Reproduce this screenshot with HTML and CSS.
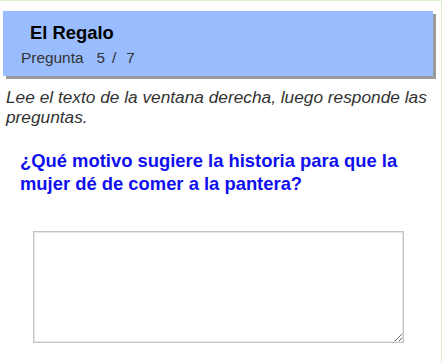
FILE: index.html
```html
<!DOCTYPE html>
<html lang="es">
<head>
<meta charset="utf-8">
<title>El Regalo</title>
<link rel="stylesheet" href="styles.css">
</head>
<body>
<div class="frame">
  <header class="banner">
    <h1 class="title">El Regalo</h1>
    <div class="counter"><span>Pregunta</span><span class="num">5</span><span class="sep">/</span><span class="num">7</span></div>
  </header>
  <p class="instructions">Lee el texto de la ventana derecha, luego responde las preguntas.</p>
  <h2 class="question">¿Qué motivo sugiere la historia para que la mujer dé de comer a la pantera?</h2>
  <div class="answer-wrap">
    <textarea class="answer"></textarea>
  </div>
</div>
</body>
</html>
```
FILE: styles.css
```css
html, body {
  margin: 0;
  padding: 0;
  background: #fff;
}
body {
  font-family: "Liberation Sans", Arial, sans-serif;
  overflow: hidden;
}
.frame {
  width: 442px;
  height: 100vh;
  box-sizing: border-box;
  border-top: 1px solid #dcefd4;
  border-right: 1px solid #dcefd4;
  padding-top: 10px;
}
.banner {
  margin-left: 3px;
  width: 430px;
  height: 65px;
  box-sizing: border-box;
  background: #99bdff;
  box-shadow: 3px 3px 0 #999;
  padding: 11px 0 0 0;
}
.title {
  margin: 0 0 0 27px;
  font-size: 18.4px;
  line-height: 21px;
  font-weight: bold;
  color: #000;
}
.counter {
  margin: 6px 0 0 18px;
  font-size: 15.4px;
  line-height: 18px;
  color: #333;
}
.counter .num { margin-left: 13px; }
.counter .sep { margin-left: 7px; }
.counter .num + .sep + .num { margin-left: 10px; }
.instructions {
  margin: 12px 6px 0 6px;
  font-size: 17.3px;
  line-height: 19.5px;
  font-style: italic;
  color: #333;
}
.question {
  margin: 22px 20px 0 20px;
  font-size: 18.4px;
  line-height: 23px;
  font-weight: bold;
  color: #1010ee;
}
.answer-wrap {
  margin: 36px 0 0 33px;
}
.answer {
  display: block;
  width: 371px;
  height: 112px;
  box-sizing: border-box;
  border: 1px solid #c4c4c4;
  box-shadow: inset 0 0 0 1px #e6e6e6;
  margin: 0;
  padding: 2px;
  resize: both;
}
```
